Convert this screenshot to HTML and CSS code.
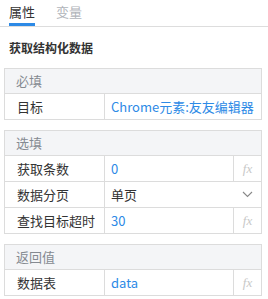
FILE: index.html
```html
<!DOCTYPE html>
<html>
<head>
    <title>属性</title>
    <link rel="stylesheet" href="styles.css">
</head>
<body>
    <!-- tabs -->
    <div class="tabs">
        <span class="tab active">属性</span>
        <span class="tab">变量</span>
    </div>

    <div class="title">获取结构化数据</div>

    <!-- required -->
    <div class="group">
        <div class="group-head">必填</div>
        <div class="row">
            <div class="label">目标</div>
            <div class="value">Chrome元素:友友编辑器</div>
        </div>
    </div>

    <!-- optional -->
    <div class="group">
        <div class="group-head">选填</div>
        <div class="row">
            <div class="label">获取条数</div>
            <div class="value">0</div>
            <div class="fx">fx</div>
        </div>
        <div class="row">
            <div class="label">数据分页</div>
            <div class="value plain">单页</div>
            <div class="arrow">
                <svg width="11" height="7" viewBox="0 0 11 7"><path d="M1 1l4.5 4.5L10 1" fill="none" stroke="#888" stroke-width="1.1"/></svg>
            </div>
        </div>
        <div class="row">
            <div class="label">查找目标超时</div>
            <div class="value">30</div>
            <div class="fx">fx</div>
        </div>
    </div>

    <!-- return -->
    <div class="group">
        <div class="group-head">返回值</div>
        <div class="row">
            <div class="label">数据表</div>
            <div class="value">data</div>
            <div class="fx">fx</div>
        </div>
    </div>
</body>
</html>
```

FILE: styles.css
```css
/* page */
body {
    margin: 0;
    font-family: "Noto Sans CJK SC", "Noto Sans", sans-serif;
    font-size: 13px;
    color: #333;
    background: #fff;
    width: 268px;
}

/* tab bar */
.tabs {
    border-bottom: 1px solid #ddd;
    display: flex;
    gap: 21px;
    padding-left: 9px;
    box-sizing: border-box;
    height: 27px;
}
.tab {
    line-height: 23px;
    height: 23px;
    color: #b0b4ba;
    padding: 0 0 3px;
}
.tab.active {
    color: #333;
    border-bottom: 3px solid #2d8ae6;
    padding-bottom: 0;
}

/* section title */
.title {
    height: 41px;
    line-height: 41px;
    padding-left: 9px;
    font-size: 12px;
    font-weight: bold;
    color: #333;
}

/* groups */
.group {
    margin: 0 6px 10px 4px;
    border: 1px solid #dcdcdc;
}
.group-head {
    height: 24px;
    line-height: 24px;
    background: #f4f5f7;
    color: #858a91;
    padding-left: 11px;
    border-bottom: 1px solid #dcdcdc;
}
.row {
    display: flex;
    height: 25px;
    line-height: 25px;
    border-bottom: 1px solid #dcdcdc;
}
.row:last-child {
    border-bottom: 0;
}
.label {
    width: 87px;
    padding-left: 12px;
    border-right: 1px solid #dcdcdc;
    flex: none;
}
.value {
    flex: 1;
    padding-left: 6px;
    color: #2d8ae6;
    white-space: nowrap;
}
.value.plain {
    color: #333;
}
.fx {
    width: 27px;
    border-left: 1px solid #dcdcdc;
    text-align: center;
    font-family: "Liberation Serif", serif;
    font-style: italic;
    color: #c8c8c8;
    font-size: 13px;
}
.arrow {
    width: 27px;
    display: flex;
    align-items: center;
    justify-content: center;
}
```
